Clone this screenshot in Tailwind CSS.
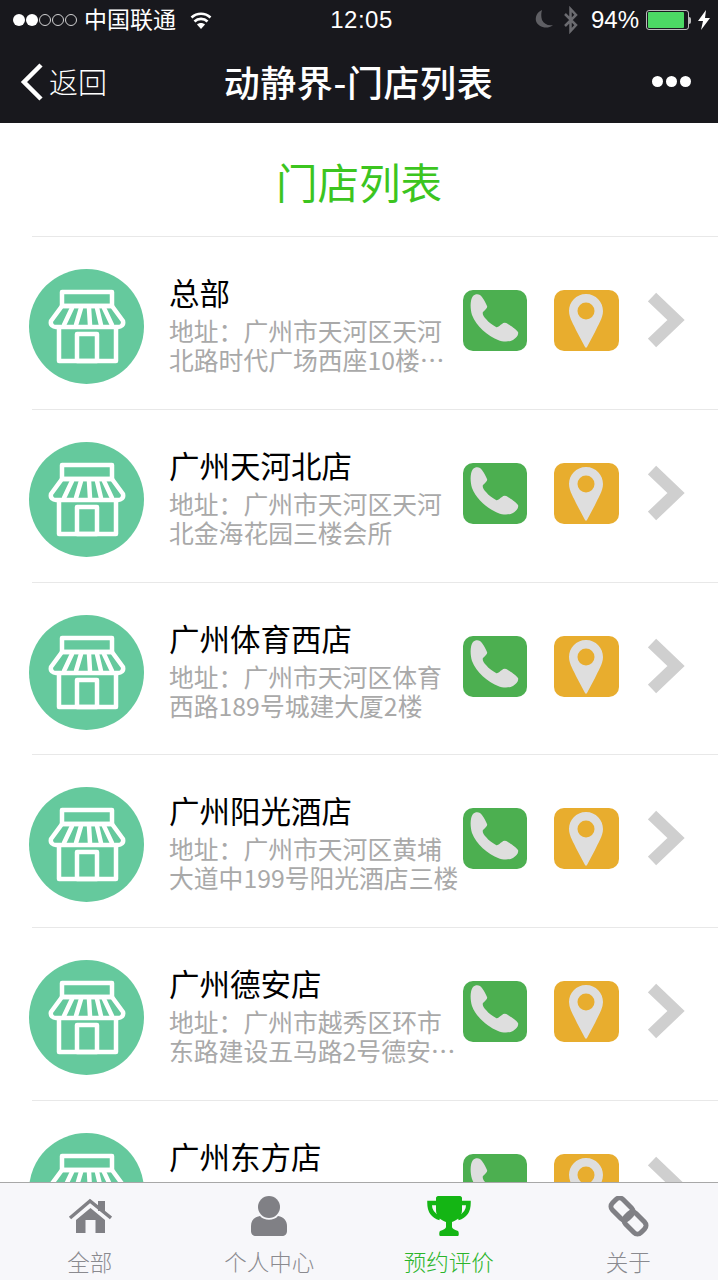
<!DOCTYPE html>
<html lang="zh-CN">
<head>
    <meta charset="UTF-8">
    <meta name="viewport" content="width=device-width, initial-scale=1.0">
    <title>动静界-门店列表</title>
    <script src="https://cdn.jsdelivr.net/npm/@tailwindcss/browser@4"></script>
</head>
<body class="bg-white font-['Noto_Sans_CJK_SC','Noto_Sans',sans-serif]">
    <svg class="hidden">
        <symbol id="store" viewBox="0 0 115 115">
            <circle cx="57.5" cy="57.5" r="57.5" fill="#65c99d"/>
            <g fill="none" stroke="#fff" stroke-width="4.500" stroke-linejoin="round" stroke-linecap="round">
                <rect x="33" y="23" width="50" height="14"/>
                <path d="M33 37H83L94 52C95 56 92 58 89 58H27C24 58 21 56 22 52Z"/>
                <path d="M43 39L35 56M52 39L47 56M60 39L61 56M68 39L72 56M75 39L83 56"/>
                <path d="M30 60V92H87V60"/>
                <rect x="48" y="65" width="20" height="27"/>
            </g>
        </symbol>
        <symbol id="phone" viewBox="0 0 64 61">
            <path fill="#dedede" d="M10 6C12 4 15 4 17 5C19 6 23 13 24 16C25 18 22 20 20 22C19 24 21 27 23 29C26 33 30 35 33 37C35 38 37 35 39 34C41 32 43 33 45 34C48 36 53 39 55 42C56 45 53 48 50 50C46 52 40 52 35 50C25 46 13 36 9 25C7 18 7 10 10 6Z"/>
        </symbol>
        <symbol id="pin" viewBox="0 0 65 61">
            <path fill="#dedede" d="M32 4C42 4 49 12 49 21C49 28 44 35 41 42L33 57C32.500 58 31.500 58 31 57L23 42C20 35 15 28 15 21C15 12 22 4 32 4Z"/>
            <circle cx="32" cy="21" r="8.500" fill="#e8ad2e"/>
        </symbol>
        <symbol id="chevron" viewBox="0 0 38 56">
            <path d="M4 5L28 28L4 51" fill="none" stroke="#cfcfcf" stroke-width="12"/>
        </symbol>
    </svg>

    <div class="w-[718px] h-[1280px] flex flex-col overflow-hidden">
        <!-- top bars -->
        <header class="h-[123px] shrink-0 bg-[#18181d] text-white">
            <div class="h-10 grid grid-cols-[1fr_auto_1fr] items-center pl-[13px] pr-[8px]">
                <div class="flex items-center">
                    <span class="w-[12px] h-[12px] mr-[1px] rounded-full bg-white"></span>
                    <span class="w-[12px] h-[12px] mr-[1px] rounded-full bg-white"></span>
                    <span class="w-[12px] h-[12px] mr-[1px] rounded-full border border-white/80"></span>
                    <span class="w-[12px] h-[12px] mr-[1px] rounded-full border border-white/80"></span>
                    <span class="w-[12px] h-[12px] mr-[1px] rounded-full border border-white/80"></span>
                    <span class="ml-[6px] -mt-1 text-[23px] leading-none">中国联通</span>
                    <svg class="ml-[12px]" width="26" height="20" viewBox="0 0 26 20">
                        <path d="M13 19L9 14.500C11 12.500 15 12.500 17 14.500Z" fill="#fff"/>
                        <path d="M6.500 11.500C10 8 16 8 19.500 11.500M3.500 7.500C9 2.500 17 2.500 22.500 7.500" fill="none" stroke="#fff" stroke-width="2.600"/>
                    </svg>
                </div>
                <div class="text-[24px] leading-none font-['Liberation_Sans',sans-serif] tracking-[0.5px]">12:05</div>
                <div class="flex items-center justify-end">
                    <svg width="22" height="22" viewBox="0 0 22 22"><path d="M8 1C3 3 1 8 2 12C4 18 13 21 19 16C14 17 10 15 8 11C7 8 7 4 8 1Z" fill="#5f5f64"/></svg>
                    <svg class="ml-[7px]" width="16" height="28" viewBox="0 0 16 28"><path d="M2 8L13 19L7.500 25V3L13 9L2 20" fill="none" stroke="#6b6b70" stroke-width="2.500"/></svg>
                    <span class="ml-[12px] text-[24px] leading-none font-['Liberation_Sans',sans-serif]">94%</span>
                    <div class="ml-[7px] w-[43px] h-[20px] rounded-[3px] border border-white/70 p-[1px]"><div class="h-full w-[93%] bg-[#4cd964] rounded-[1px]"></div></div>
                    <span class="w-[2px] h-[7px] bg-white/70 rounded-r-sm"></span>
                    <svg class="ml-[7px]" width="12" height="20" viewBox="0 0 12 20"><path d="M8 0L0 11H5L3 20L12 8H7Z" fill="#fff"/></svg>
                </div>
            </div>
            <div class="h-[83px] grid grid-cols-[1fr_auto_1fr] items-center pl-[26px] pr-[27px]">
                <div class="flex items-center">
                    <svg class="-ml-[6px]" width="24" height="38" viewBox="0 0 24 38"><path d="M21 2L4 19L21 36" fill="none" stroke="#fff" stroke-width="4.500"/></svg>
                    <span class="ml-[5px] text-[29px] leading-none font-light">返回</span>
                </div>
                <div class="-mt-[2px] text-[36px] leading-none font-medium tracking-[0.6px]">动静界-门店列表</div>
                <div class="flex justify-end gap-[3px]">
                    <span class="w-[11px] h-[11px] rounded-full bg-white"></span>
                    <span class="w-[11px] h-[11px] rounded-full bg-white"></span>
                    <span class="w-[11px] h-[11px] rounded-full bg-white"></span>
                </div>
            </div>
        </header>

        <main class="flex-1 overflow-hidden">
            <h1 class="h-[113px] pt-[3px] flex items-center justify-center text-[41.500px] text-[#3cc51f]">门店列表</h1>

            <section class="h-[172.800px] ml-[32px] border-t border-[#e8e8e8] flex items-start pt-[32px]">
                <svg class="-ml-[3px] shrink-0" width="115" height="115"><use href="#store"/></svg>
                <div class="ml-[25px] w-[294px] shrink-0">
                    <h2 class="text-[30.500px] leading-[47px] text-black">总部</h2>
                    <p class="text-[24.800px] leading-[29px] text-[#a9a9a9]">地址：广州市天河区天河北路时代广场西座10楼…</p>
                </div>
                <svg class="mt-[21px] shrink-0 rounded-[10px] bg-[#4caf50]" width="64" height="61"><use href="#phone"/></svg>
                <svg class="mt-[21px] ml-[27px] shrink-0 rounded-[10px] bg-[#e8ad2e]" width="65" height="61"><use href="#pin"/></svg>
                <svg class="mt-[23px] ml-[29px] shrink-0" width="38" height="56"><use href="#chevron"/></svg>
            </section>

            <section class="h-[172.800px] ml-[32px] border-t border-[#e8e8e8] flex items-start pt-[32px]">
                <svg class="-ml-[3px] shrink-0" width="115" height="115"><use href="#store"/></svg>
                <div class="ml-[25px] w-[294px] shrink-0">
                    <h2 class="text-[30.500px] leading-[47px] text-black">广州天河北店</h2>
                    <p class="text-[24.800px] leading-[29px] text-[#a9a9a9]">地址：广州市天河区天河北金海花园三楼会所</p>
                </div>
                <svg class="mt-[21px] shrink-0 rounded-[10px] bg-[#4caf50]" width="64" height="61"><use href="#phone"/></svg>
                <svg class="mt-[21px] ml-[27px] shrink-0 rounded-[10px] bg-[#e8ad2e]" width="65" height="61"><use href="#pin"/></svg>
                <svg class="mt-[23px] ml-[29px] shrink-0" width="38" height="56"><use href="#chevron"/></svg>
            </section>

            <section class="h-[172.800px] ml-[32px] border-t border-[#e8e8e8] flex items-start pt-[32px]">
                <svg class="-ml-[3px] shrink-0" width="115" height="115"><use href="#store"/></svg>
                <div class="ml-[25px] w-[294px] shrink-0">
                    <h2 class="text-[30.500px] leading-[47px] text-black">广州体育西店</h2>
                    <p class="text-[24.800px] leading-[29px] text-[#a9a9a9]">地址：广州市天河区体育西路189号城建大厦2楼</p>
                </div>
                <svg class="mt-[21px] shrink-0 rounded-[10px] bg-[#4caf50]" width="64" height="61"><use href="#phone"/></svg>
                <svg class="mt-[21px] ml-[27px] shrink-0 rounded-[10px] bg-[#e8ad2e]" width="65" height="61"><use href="#pin"/></svg>
                <svg class="mt-[23px] ml-[29px] shrink-0" width="38" height="56"><use href="#chevron"/></svg>
            </section>

            <section class="h-[172.800px] ml-[32px] border-t border-[#e8e8e8] flex items-start pt-[32px]">
                <svg class="-ml-[3px] shrink-0" width="115" height="115"><use href="#store"/></svg>
                <div class="ml-[25px] w-[294px] shrink-0">
                    <h2 class="text-[30.500px] leading-[47px] text-black">广州阳光酒店</h2>
                    <p class="text-[24.800px] leading-[29px] text-[#a9a9a9]">地址：广州市天河区黄埔大道中199号阳光酒店三楼</p>
                </div>
                <svg class="mt-[21px] shrink-0 rounded-[10px] bg-[#4caf50]" width="64" height="61"><use href="#phone"/></svg>
                <svg class="mt-[21px] ml-[27px] shrink-0 rounded-[10px] bg-[#e8ad2e]" width="65" height="61"><use href="#pin"/></svg>
                <svg class="mt-[23px] ml-[29px] shrink-0" width="38" height="56"><use href="#chevron"/></svg>
            </section>

            <section class="h-[172.800px] ml-[32px] border-t border-[#e8e8e8] flex items-start pt-[32px]">
                <svg class="-ml-[3px] shrink-0" width="115" height="115"><use href="#store"/></svg>
                <div class="ml-[25px] w-[294px] shrink-0">
                    <h2 class="text-[30.500px] leading-[47px] text-black">广州德安店</h2>
                    <p class="text-[24.800px] leading-[29px] text-[#a9a9a9]">地址：广州市越秀区环市东路建设五马路2号德安…</p>
                </div>
                <svg class="mt-[21px] shrink-0 rounded-[10px] bg-[#4caf50]" width="64" height="61"><use href="#phone"/></svg>
                <svg class="mt-[21px] ml-[27px] shrink-0 rounded-[10px] bg-[#e8ad2e]" width="65" height="61"><use href="#pin"/></svg>
                <svg class="mt-[23px] ml-[29px] shrink-0" width="38" height="56"><use href="#chevron"/></svg>
            </section>

            <section class="h-[172.800px] ml-[32px] border-t border-[#e8e8e8] flex items-start pt-[32px]">
                <svg class="-ml-[3px] shrink-0" width="115" height="115"><use href="#store"/></svg>
                <div class="ml-[25px] w-[294px] shrink-0">
                    <h2 class="text-[30.500px] leading-[47px] text-black">广州东方店</h2>
                </div>
                <svg class="mt-[21px] shrink-0 rounded-[10px] bg-[#4caf50]" width="64" height="61"><use href="#phone"/></svg>
                <svg class="mt-[21px] ml-[27px] shrink-0 rounded-[10px] bg-[#e8ad2e]" width="65" height="61"><use href="#pin"/></svg>
                <svg class="mt-[23px] ml-[29px] shrink-0" width="38" height="56"><use href="#chevron"/></svg>
            </section>
        </main>

        <!-- tab bar -->
        <nav class="h-[98px] shrink-0 grid grid-cols-4 bg-[#f7f7fa] border-t border-[#a8a8a8] text-[22.500px] leading-none text-[#8a8a8f] font-light">
            <a class="flex flex-col items-center pt-[13px]">
                <svg width="44" height="42" viewBox="0 0 44 42">
                    <path d="M2 22L22 5L43 22" fill="none" stroke="#808085" stroke-width="3.500"/>
                    <rect x="30" y="5" width="7" height="10" fill="#808085"/>
                    <path d="M8 24L22.500 12L37 24V37H27.500V24H17.500V37H8Z" fill="#808085"/>
                </svg>
                <span class="mt-[12px]">全部</span>
            </a>
            <a class="flex flex-col items-center pt-[13px]">
                <svg width="38" height="42" viewBox="0 0 38 42">
                    <circle cx="19" cy="11" r="11" fill="#808085"/>
                    <path d="M10 20C14 25 24 25 28 20C34 21 37 25 37 30V35C37 38 35 40 32 40H6C3 40 1 38 1 35V30C1 25 4 21 10 20Z" fill="#808085"/>
                </svg>
                <span class="mt-[12px]">个人中心</span>
            </a>
            <a class="flex flex-col items-center pt-[13px] text-[#2bb52b]">
                <svg width="44" height="42" viewBox="0 0 44 42">
                    <path d="M11 0H33C34 0 35 1 35 2V14C35 21 30 24 25 26V31C25 32 27 34 31 35C32 36 32 40 31 40H13C12 40 12 36 13 35C17 34 19 32 19 31V26C14 24 9 21 9 14V2C9 1 10 0 11 0Z" fill="#14b514"/>
                    <path d="M9 7H2.500C2.500 15 6 20 13 22M35 7H41.500C41.500 15 38 20 31 22" fill="none" stroke="#14b514" stroke-width="4.500"/>
                </svg>
                <span class="mt-[12px]">预约评价</span>
            </a>
            <a class="flex flex-col items-center pt-[13px]">
                <svg width="42" height="42" viewBox="0 0 42 42">
                    <g fill="none" stroke="#808085" stroke-width="5" stroke-linejoin="round">
                        <rect x="4" y="5.500" width="22" height="15" rx="5" transform="rotate(45 15 13)"/>
                        <rect x="17" y="19.500" width="22" height="15" rx="5" transform="rotate(45 28 27)"/>
                    </g>
                </svg>
                <span class="mt-[12px]">关于</span>
            </a>
        </nav>
    </div>
</body>
</html>
